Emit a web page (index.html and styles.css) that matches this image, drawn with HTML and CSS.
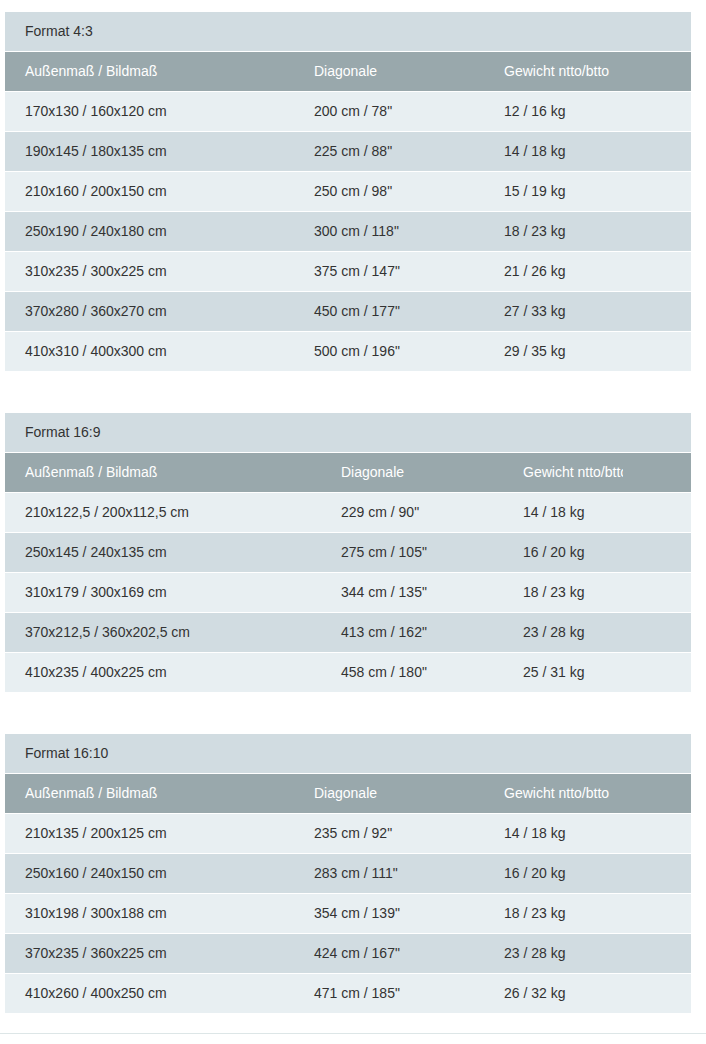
FILE: index.html
```html
<!DOCTYPE html>
<html lang="de">
<head>
<meta charset="utf-8">
<title>Formate</title>
<link rel="stylesheet" href="styles.css">
</head>
<body>
<div class="page">
  <table class="spec spec-a">
    <colgroup><col class="c1"><col class="c2"><col class="c3"></colgroup>
    <thead>
      <tr class="caption"><th colspan="3">Format 4:3</th></tr>
      <tr class="head"><th>Außenmaß / Bildmaß</th><th>Diagonale</th><th>Gewicht ntto/btto</th></tr>
    </thead>
    <tbody>
      <tr><td>170x130 / 160x120 cm</td><td>200 cm / 78"</td><td>12 / 16 kg</td></tr>
      <tr><td>190x145 / 180x135 cm</td><td>225 cm / 88"</td><td>14 / 18 kg</td></tr>
      <tr><td>210x160 / 200x150 cm</td><td>250 cm / 98"</td><td>15 / 19 kg</td></tr>
      <tr><td>250x190 / 240x180 cm</td><td>300 cm / 118"</td><td>18 / 23 kg</td></tr>
      <tr><td>310x235 / 300x225 cm</td><td>375 cm / 147"</td><td>21 / 26 kg</td></tr>
      <tr><td>370x280 / 360x270 cm</td><td>450 cm / 177"</td><td>27 / 33 kg</td></tr>
      <tr><td>410x310 / 400x300 cm</td><td>500 cm / 196"</td><td>29 / 35 kg</td></tr>
    </tbody>
  </table>

  <table class="spec spec-b">
    <colgroup><col class="c1"><col class="c2"><col class="c3"></colgroup>
    <thead>
      <tr class="caption"><th colspan="3">Format 16:9</th></tr>
      <tr class="head"><th>Außenmaß / Bildmaß</th><th>Diagonale</th><th><span class="clip">Gewicht ntto/btto</span></th></tr>
    </thead>
    <tbody>
      <tr><td>210x122,5 / 200x112,5 cm</td><td>229 cm / 90"</td><td>14 / 18 kg</td></tr>
      <tr><td>250x145 / 240x135 cm</td><td>275 cm / 105"</td><td>16 / 20 kg</td></tr>
      <tr><td>310x179 / 300x169 cm</td><td>344 cm / 135"</td><td>18 / 23 kg</td></tr>
      <tr><td>370x212,5 / 360x202,5 cm</td><td>413 cm / 162"</td><td>23 / 28 kg</td></tr>
      <tr><td>410x235 / 400x225 cm</td><td>458 cm / 180"</td><td>25 / 31 kg</td></tr>
    </tbody>
  </table>

  <table class="spec spec-a">
    <colgroup><col class="c1"><col class="c2"><col class="c3"></colgroup>
    <thead>
      <tr class="caption"><th colspan="3">Format 16:10</th></tr>
      <tr class="head"><th>Außenmaß / Bildmaß</th><th>Diagonale</th><th>Gewicht ntto/btto</th></tr>
    </thead>
    <tbody>
      <tr><td>210x135 / 200x125 cm</td><td>235 cm / 92"</td><td>14 / 18 kg</td></tr>
      <tr><td>250x160 / 240x150 cm</td><td>283 cm / 111"</td><td>16 / 20 kg</td></tr>
      <tr><td>310x198 / 300x188 cm</td><td>354 cm / 139"</td><td>18 / 23 kg</td></tr>
      <tr><td>370x235 / 360x225 cm</td><td>424 cm / 167"</td><td>23 / 28 kg</td></tr>
      <tr><td>410x260 / 400x250 cm</td><td>471 cm / 185"</td><td>26 / 32 kg</td></tr>
    </tbody>
  </table>
</div>
<hr class="rule">
</body>
</html>
```

FILE: styles.css
```css
html, body {
  margin: 0;
  padding: 0;
  background: #ffffff;
}
body {
  font-family: "Liberation Sans", Arial, sans-serif;
  font-size: 14px;
  color: #333333;
}
.page {
  padding: 12px 15px 0 5px;
  display: flex;
  flex-direction: column;
  gap: 42px;
}
.spec {
  width: 686px;
  border-collapse: collapse;
  table-layout: fixed;
}
.spec th,
.spec td {
  height: 37px;
  padding: 0 0 2px 20px;
  text-align: left;
  font-weight: normal;
  vertical-align: middle;
  white-space: nowrap;
  overflow: hidden;
  border-top: 1px solid #ffffff;
  line-height: 16px;
}
.spec .caption th {
  border-top: none;
  background: #d1dce1;
  color: #333333;
}
.spec .head th {
  background: #99a8ac;
  color: #ffffff;
}
.spec tbody tr:nth-child(odd) td {
  background: #e8eff2;
}
.spec tbody tr:nth-child(even) td {
  background: #d1dce1;
}
.spec-a .c1 { width: 289px; }
.spec-a .c2 { width: 190px; }
.spec-a .c3 { width: 207px; }
.spec-b .c1 { width: 316px; }
.spec-b .c2 { width: 182px; }
.spec-b .c3 { width: 188px; }
.clip {
  display: inline-block;
  width: 100px;
  overflow: hidden;
  vertical-align: top;
}
.rule {
  margin: 20px 0 0 0;
  border: none;
  height: 1px;
  background: #dde6e7;
}
```
